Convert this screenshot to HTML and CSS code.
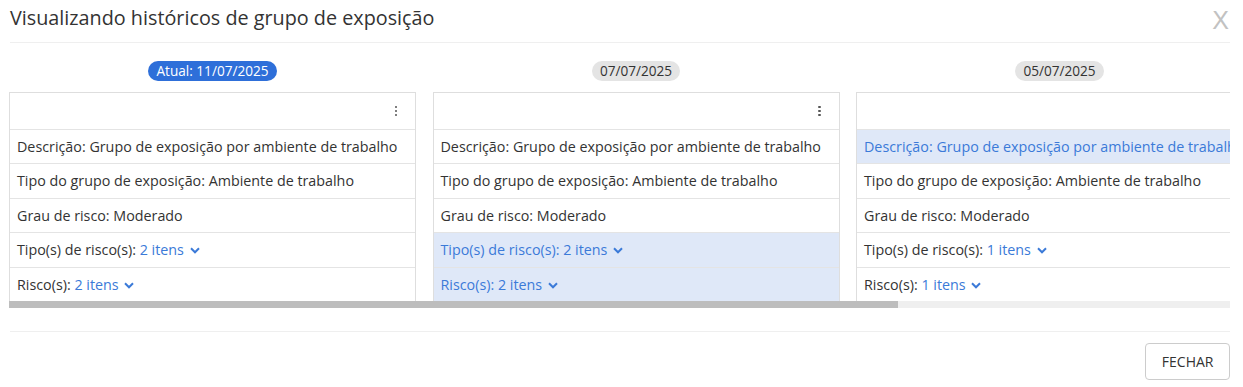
FILE: index.html
```html
<!DOCTYPE html>
<html lang="pt-BR">
<head>
    <meta charset="UTF-8">
    <title>Visualizando históricos de grupo de exposição</title>
    <link rel="stylesheet" href="styles.css">
</head>
<body>
    <div class="modal">
        <div class="modal-header">
            <h1>Visualizando históricos de grupo de exposição</h1>
            <span class="close">X</span>
        </div>

        <div class="history">
            <div class="column">
                <span class="badge current">Atual: 11/07/2025</span>
                <div class="card">
                    <div class="card-head"><span class="kebab"><i></i><i></i><i></i></span></div>
                    <div class="row">Descrição: Grupo de exposição por ambiente de trabalho</div>
                    <div class="row">Tipo do grupo de exposição: Ambiente de trabalho</div>
                    <div class="row">Grau de risco: Moderado</div>
                    <div class="row">Tipo(s) de risco(s): <a class="more">2 itens <svg width="10" height="7" viewBox="0 0 10 7"><path d="M1 1.3l4 4 4-4" fill="none" stroke="currentColor" stroke-width="2"/></svg></a></div>
                    <div class="row">Risco(s): <a class="more">2 itens <svg width="10" height="7" viewBox="0 0 10 7"><path d="M1 1.3l4 4 4-4" fill="none" stroke="currentColor" stroke-width="2"/></svg></a></div>
                </div>
            </div>

            <div class="column">
                <span class="badge">07/07/2025</span>
                <div class="card">
                    <div class="card-head"><span class="kebab"><i></i><i></i><i></i></span></div>
                    <div class="row">Descrição: Grupo de exposição por ambiente de trabalho</div>
                    <div class="row">Tipo do grupo de exposição: Ambiente de trabalho</div>
                    <div class="row">Grau de risco: Moderado</div>
                    <div class="row changed">Tipo(s) de risco(s): <a class="more">2 itens <svg width="10" height="7" viewBox="0 0 10 7"><path d="M1 1.3l4 4 4-4" fill="none" stroke="currentColor" stroke-width="2"/></svg></a></div>
                    <div class="row changed">Risco(s): <a class="more">2 itens <svg width="10" height="7" viewBox="0 0 10 7"><path d="M1 1.3l4 4 4-4" fill="none" stroke="currentColor" stroke-width="2"/></svg></a></div>
                </div>
            </div>

            <div class="column">
                <span class="badge">05/07/2025</span>
                <div class="card">
                    <div class="card-head"><span class="kebab"><i></i><i></i><i></i></span></div>
                    <div class="row changed">Descrição: Grupo de exposição por ambiente de trabalho</div>
                    <div class="row">Tipo do grupo de exposição: Ambiente de trabalho</div>
                    <div class="row">Grau de risco: Moderado</div>
                    <div class="row">Tipo(s) de risco(s): <a class="more">1 itens <svg width="10" height="7" viewBox="0 0 10 7"><path d="M1 1.3l4 4 4-4" fill="none" stroke="currentColor" stroke-width="2"/></svg></a></div>
                    <div class="row">Risco(s): <a class="more">1 itens <svg width="10" height="7" viewBox="0 0 10 7"><path d="M1 1.3l4 4 4-4" fill="none" stroke="currentColor" stroke-width="2"/></svg></a></div>
                </div>
            </div>

            <div class="column">
                <span class="badge">01/07/2025</span>
                <div class="card">
                    <div class="card-head"><span class="kebab"><i></i><i></i><i></i></span></div>
                    <div class="row">Descrição: Grupo de exposição por ambiente de trabalho</div>
                    <div class="row">Tipo do grupo de exposição: Ambiente de trabalho</div>
                    <div class="row">Grau de risco: Moderado</div>
                    <div class="row">Tipo(s) de risco(s): <a class="more">1 itens <svg width="10" height="7" viewBox="0 0 10 7"><path d="M1 1.3l4 4 4-4" fill="none" stroke="currentColor" stroke-width="2"/></svg></a></div>
                    <div class="row">Risco(s): <a class="more">1 itens <svg width="10" height="7" viewBox="0 0 10 7"><path d="M1 1.3l4 4 4-4" fill="none" stroke="currentColor" stroke-width="2"/></svg></a></div>
                </div>
            </div>
        </div>
        <!-- visible scrollbar, thumb = viewport / content width -->
        <div class="scrollbar"><div class="thumb" style="width: 72.8%"></div></div>

        <div class="modal-footer">
            <button class="button">FECHAR</button>
        </div>
    </div>
</body>
</html>
```

FILE: styles.css
```css
body {
    margin: 0;
    background: #fff;
    color: #333;
    font-family: "Open Sans", "Noto Sans", sans-serif;
}

.modal {
    padding: 0 13px 0 9px;
}

.modal-header {
    display: flex;
    justify-content: space-between;
    align-items: flex-start;
    height: 42px;
    margin-left: 1px;
    border-bottom: 1px solid #efefef;
}

.modal-header h1 {
    margin: 4px 0 0;
    font-size: 19.8px;
    font-weight: 400;
    color: #333;
    line-height: 28px;
}

.close {
    font-family: "Liberation Sans", Arial, sans-serif;
    font-size: 25px;
    line-height: 25px;
    color: #c2c2c2;
    margin: 8px 1px 0 0;
    cursor: pointer;
}

.history {
    display: flex;
    gap: 16.5px;
    margin-top: 18px;
    overflow: hidden;
}

.scrollbar {
    height: 7px;
    background: #efefef;
}

.thumb {
    height: 100%;
    background: #bdbdbd;
}

.column {
    flex: 0 0 407px;
    display: flex;
    flex-direction: column;
    align-items: center;
}

.badge {
    font-size: 13.6px;
    line-height: 20px;
    padding: 0 8px;
    border-radius: 10px;
    background: #e4e4e4;
    color: #333;
    margin-bottom: 11px;
}

.badge.current {
    background: #2e6fd9;
    color: #fff;
}

.card {
    align-self: stretch;
    border: 1px solid #dedede;
    border-bottom: none;
    font-size: 14.3px;
}

.card-head {
    height: 36px;
    display: flex;
    align-items: center;
    justify-content: flex-end;
    padding-right: 18px;
}

.kebab {
    display: flex;
    flex-direction: column;
    gap: 1.5px;
}

.kebab i {
    width: 2.5px;
    height: 2.5px;
    background: #555;
    border-radius: 50%;
}

.row {
    border-top: 1px solid #e4e4e4;
    padding: 7px 7px 6.4px;
    line-height: 20px;
    white-space: nowrap;
    overflow: hidden;
}

.row.changed {
    background: #dfe8f8;
    color: #3b7ad8;
}

.more {
    color: #3b7ad8;
    cursor: pointer;
}

.more svg {
    margin-left: 2px;
    vertical-align: 1px;
}

.modal-footer {
    margin-top: 23px;
    margin-left: 1px;
    border-top: 1px solid #efefef;
    padding-top: 11px;
    display: flex;
    justify-content: flex-end;
}

.button {
    font-family: inherit;
    font-size: 14px;
    color: #333;
    background: #fff;
    border: 1px solid #ccc;
    border-radius: 4px;
    height: 37px;
    padding: 0 15.5px;
    cursor: pointer;
}
```
